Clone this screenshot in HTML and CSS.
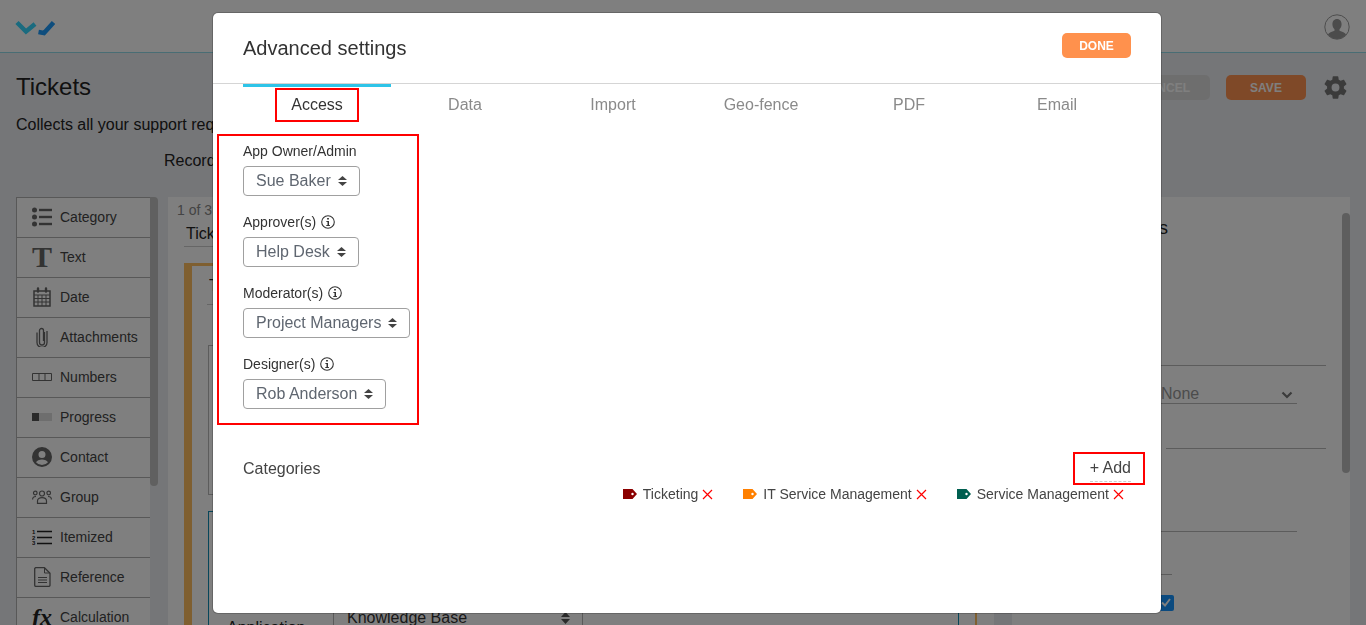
FILE: index.html
```html
<!DOCTYPE html>
<html lang="en">
<head>
<meta charset="utf-8">
<title>Advanced settings</title>
<link rel="stylesheet" href="styles.css">
</head>
<body>
<div class="page">
  <header class="topbar">
    <svg class="logo" viewBox="0 0 40 16" width="40" height="16"><path class="logo-a" d="M2 2.500 L11 11.500 L20 4" /><path class="logo-b" d="M23.500 12 L29 13 L38.500 2.500" /></svg>
    <svg class="avatar" viewBox="0 0 26 26" width="26" height="26"><circle cx="13" cy="13" r="12.200" fill="none" stroke="#999" stroke-width="1"/><path d="M13 5c3 0 4.600 2.300 4.600 5.200 0 2.100-.9 4-2.100 5v1.600c2.800 1 5.500 2 6.600 3.700A12 12 0 0 1 13 25a12 12 0 0 1-9.100-4.500c1.100-1.700 3.800-2.700 6.600-3.700v-1.600c-1.200-1-2.100-2.900-2.100-5C8.400 7.300 10 5 13 5z" fill="#999"/></svg>
  </header>
  <main class="main">
    <div class="title-row">
      <h1 class="title">Tickets</h1>
      <div class="actions">
        <button class="btn btn-cancel">CANCEL</button>
        <button class="btn btn-save">SAVE</button>
        <svg class="gear" viewBox="0 0 24 24" width="27" height="27"><path fill="#777" d="M19.430 12.980c.04-.32.07-.64.07-.98s-.03-.66-.07-.98l2.110-1.650c.19-.15.240-.42.120-.64l-2-3.460c-.12-.22-.390-.3-.610-.22l-2.490 1c-.52-.4-1.080-.73-1.690-.98l-.38-2.650A.49.49 0 0 0 14 2h-4c-.25 0-.46.18-.49.42l-.38 2.650c-.61.25-1.170.59-1.690.98l-2.490-1c-.23-.09-.49 0-.61.22l-2 3.460c-.13.22-.07.490.12.640l2.110 1.650c-.04.32-.07.65-.07.98s.03.66.07.98l-2.110 1.650c-.19.15-.24.42-.12.64l2 3.460c.12.22.39.3.61.22l2.490-1c.52.4 1.080.73 1.690.98l.38 2.650c.03.24.24.42.49.42h4c.25 0 .46-.18.49-.42l.38-2.650c.61-.25 1.170-.59 1.690-.98l2.490 1c.23.09.49 0 .61-.22l2-3.460c.12-.22.07-.49-.12-.64l-2.110-1.650zM12 15.500a3.500 3.500 0 1 1 0-7 3.500 3.500 0 0 1 0 7z"/></svg>
      </div>
    </div>
    <p class="subtitle">Collects all your support requests in one place</p>
    <p class="record">Record</p>
    <div class="workspace">
      <div class="palette-wrap">
        <ul class="palette">
          <li class="pal-item"><span class="pal-icon"><svg viewBox="0 0 20 20" width="20" height="20"><g fill="#666"><circle cx="2.500" cy="3" r="2.500"/><circle cx="2.500" cy="10" r="2.500"/><circle cx="2.500" cy="17" r="2.500"/><rect x="7" y="1.800" width="13" height="2.400"/><rect x="7" y="8.800" width="13" height="2.400"/><rect x="7" y="15.800" width="13" height="2.400"/></g></svg></span>Category</li>
          <li class="pal-item"><span class="pal-icon pal-serif">T</span>Text</li>
          <li class="pal-item"><span class="pal-icon"><svg viewBox="0 0 18 20" width="18" height="20"><path fill="none" stroke="#666" stroke-width="1.500" d="M1 4h16v15H1z"/><path stroke="#666" stroke-width="1" d="M1 8h16M1 11.500h16M1 15h16M5 8v11M9 8v11M13 8v11"/><path stroke="#666" stroke-width="2.400" stroke-linecap="round" d="M5 1.500v3M13 1.500v3"/></svg></span>Date</li>
          <li class="pal-item"><span class="pal-icon"><svg viewBox="0 0 12 20" width="12" height="20"><path fill="none" stroke="#666" stroke-width="1.300" d="M8.500 5v10.500a2.500 2.500 0 0 1-5 0V3.500a2 2 0 0 1 4 0V14M1 5.500v10a5 5 0 0 0 10 0V4"/></svg></span>Attachments</li>
          <li class="pal-item"><span class="pal-icon"><svg viewBox="0 0 20 8" width="20" height="8"><path fill="none" stroke="#666" d="M.5.500h19v7H.5zM7 .5v7M13 .5v7"/></svg></span>Numbers</li>
          <li class="pal-item"><span class="pal-icon"><svg viewBox="0 0 20 8" width="20" height="8"><rect width="7" height="8" fill="#555"/><rect x="7" width="13" height="8" fill="#ddd"/></svg></span>Progress</li>
          <li class="pal-item"><span class="pal-icon"><svg viewBox="0 0 20 20" width="20" height="20"><path fill="#666" fill-rule="evenodd" d="M10 0a10 10 0 1 0 0 20 10 10 0 0 0 0-20zm0 4a3.500 3.500 0 1 1 0 7 3.500 3.500 0 0 1 0-7zm0 14a8 8 0 0 1-6-2.800c.7-1.700 3.500-2.800 6-2.800s5.300 1.100 6 2.800A8 8 0 0 1 10 18z"/></svg></span>Contact</li>
          <li class="pal-item"><span class="pal-icon"><svg viewBox="0 0 20 14" width="20" height="14"><g fill="none" stroke="#666" stroke-width="1.200"><circle cx="10" cy="3.500" r="2.500"/><circle cx="3.300" cy="3" r="1.800"/><circle cx="16.700" cy="3" r="1.800"/><path d="M5.500 13.400v-2.500c0-2 2-3.200 4.500-3.200s4.500 1.200 4.500 3.200v2.500z"/><path d="M.6 9.500c0-2 1.300-3 3.400-3M19.400 9.500c0-2-1.300-3-3.400-3"/></g></svg></span>Group</li>
          <li class="pal-item"><span class="pal-icon"><svg viewBox="0 0 20 16" width="20" height="16"><path stroke="#222" stroke-width="1.400" d="M5 2.500h15M5 8.500h15M5 14.500h15"/><g class="num-mini"><text x="0" y="5">1</text><text x="0" y="10.500">2</text><text x="0" y="16">3</text></g></svg></span>Itemized</li>
          <li class="pal-item"><span class="pal-icon"><svg viewBox="0 0 17 20" width="17" height="20"><path fill="none" stroke="#666" stroke-width="1.300" stroke-linejoin="round" d="M1.500.700h9l5.500 5.500v12a1.200 1.200 0 0 1-1.200 1.200H1.700A1.200 1.200 0 0 1 .7 18.200V1.500z"/><path fill="none" stroke="#666" stroke-width="1" d="M10.500 1v5h5.500M4 10.500h9M4 13h9M4 15.500h9"/></svg></span>Reference</li>
          <li class="pal-item"><span class="pal-icon pal-fx">fx</span>Calculation</li>
        </ul>
        <div class="pal-scroll"></div>
      </div>
      <section class="canvas">
        <div class="page-count">1 of 3</div>
        <div class="page-name">Tickets</div>
        <div class="card">
          <div class="card-title">Tickets</div>
          <div class="card-box"></div>
          <div class="card-active">
            <div class="app-row">
              <span class="app-label">Application</span>
              <span class="app-select">Knowledge Base<svg class="updown" viewBox="0 0 9 12" width="9" height="12"><path fill="#555" d="M4.500 0L9 5H0zM4.500 12L0 7h9z"/></svg></span>
            </div>
          </div>
        </div>
      </section>
      <aside class="props">
        <div class="props-head">Field settings</div>
        <div class="rule rule-a"></div>
        <div class="none-select">None<svg viewBox="0 0 12 8" width="12" height="8"><path fill="none" stroke="#777" stroke-width="2.200" d="M1.500 1.500L6 6l4.500-4.500"/></svg></div>
        <div class="rule rule-b"></div>
        <div class="rule rule-c"></div>
        <div class="rule rule-d"></div>
        <div class="check-row"><span class="checkbox"><svg viewBox="0 0 14 14" width="14" height="14"><path fill="none" stroke="#fff" stroke-width="2" d="M3 7.500l3 3 5-6.500"/></svg></span></div>
        <div class="props-scroll"></div>
      </aside>
    </div>
  </main>
</div>
<div class="backdrop"></div>
<div class="modal">
  <div class="modal-head">
    <h2 class="modal-title">Advanced settings</h2>
    <button class="done">DONE</button>
  </div>
  <nav class="tabs">
    <div class="tab tab-active"><span class="mark-tab">Access</span></div>
    <div class="tab">Data</div>
    <div class="tab">Import</div>
    <div class="tab">Geo-fence</div>
    <div class="tab">PDF</div>
    <div class="tab">Email</div>
  </nav>
  <div class="access">
    <div class="field">
      <div class="field-label">App Owner/Admin</div>
      <div class="select">Sue Baker<svg class="updown" viewBox="0 0 9 12" width="9" height="12"><path fill="#444" d="M4.500 1L9 5H0zM4.500 11L0 7h9z"/></svg></div>
    </div>
    <div class="field">
      <div class="field-label">Approver(s)<svg class="info" viewBox="0 0 14 14" width="14" height="14"><circle cx="7" cy="7" r="6.300" fill="none" stroke="#333" stroke-width="1.100"/><path fill="#333" d="M6.100 3h1.800v1.600H6.100zM5.400 6h2.600v3.900h.9V11H5.300V9.900h1.200V7.100H5.400z"/></svg></div>
      <div class="select">Help Desk<svg class="updown" viewBox="0 0 9 12" width="9" height="12"><path fill="#444" d="M4.500 1L9 5H0zM4.500 11L0 7h9z"/></svg></div>
    </div>
    <div class="field">
      <div class="field-label">Moderator(s)<svg class="info" viewBox="0 0 14 14" width="14" height="14"><circle cx="7" cy="7" r="6.300" fill="none" stroke="#333" stroke-width="1.100"/><path fill="#333" d="M6.100 3h1.800v1.600H6.100zM5.400 6h2.600v3.900h.9V11H5.300V9.900h1.200V7.100H5.400z"/></svg></div>
      <div class="select">Project Managers<svg class="updown" viewBox="0 0 9 12" width="9" height="12"><path fill="#444" d="M4.500 1L9 5H0zM4.500 11L0 7h9z"/></svg></div>
    </div>
    <div class="field">
      <div class="field-label">Designer(s)<svg class="info" viewBox="0 0 14 14" width="14" height="14"><circle cx="7" cy="7" r="6.300" fill="none" stroke="#333" stroke-width="1.100"/><path fill="#333" d="M6.100 3h1.800v1.600H6.100zM5.400 6h2.600v3.900h.9V11H5.300V9.900h1.200V7.100H5.400z"/></svg></div>
      <div class="select">Rob Anderson<svg class="updown" viewBox="0 0 9 12" width="9" height="12"><path fill="#444" d="M4.500 1L9 5H0zM4.500 11L0 7h9z"/></svg></div>
    </div>
  </div>
  <div class="cat-head">
    <span class="cat-title">Categories</span>
    <span class="add-mark"><span class="add">+ Add</span></span>
  </div>
  <div class="tags">
    <span class="tag"><svg class="tag-icon" viewBox="0 0 14 10" width="14" height="10"><path class="tag-red" fill-rule="evenodd" d="M0 0h9.500L14 5 9.500 10H0zM9.500 3.800a1.200 1.200 0 1 0 0 2.400 1.200 1.200 0 0 0 0-2.400z"/></svg>Ticketing<svg class="x" viewBox="0 0 11 11" width="11" height="11"><path d="M1 1l9 9M10 1l-9 9"/></svg></span>
    <span class="tag"><svg class="tag-icon" viewBox="0 0 14 10" width="14" height="10"><path class="tag-orange" fill-rule="evenodd" d="M0 0h9.500L14 5 9.500 10H0zM9.500 3.800a1.200 1.200 0 1 0 0 2.400 1.200 1.200 0 0 0 0-2.400z"/></svg>IT Service Management<svg class="x" viewBox="0 0 11 11" width="11" height="11"><path d="M1 1l9 9M10 1l-9 9"/></svg></span>
    <span class="tag"><svg class="tag-icon" viewBox="0 0 14 10" width="14" height="10"><path class="tag-green" fill-rule="evenodd" d="M0 0h9.500L14 5 9.500 10H0zM9.500 3.800a1.200 1.200 0 1 0 0 2.400 1.200 1.200 0 0 0 0-2.400z"/></svg>Service Management<svg class="x" viewBox="0 0 11 11" width="11" height="11"><path d="M1 1l9 9M10 1l-9 9"/></svg></span>
  </div>
</div>
</body>
</html>
```

FILE: styles.css
```css
* { box-sizing: border-box; }
html, body { margin: 0; height: 625px; overflow: hidden; }
body { font-family: "Liberation Sans", Arial, sans-serif; color: #333; background: #eaecf0; }
.page { width: 1366px; height: 625px; overflow: hidden; }

.topbar { height: 53px; background: #fff; border-bottom: 1px solid #93dbe9; display: flex; align-items: center; justify-content: space-between; padding: 0 16px 0 15px; }
.logo { margin-top: 4px; }
.logo path { fill: none; stroke-width: 4.500; }
.logo-a { stroke: #34d6ff; }
.logo-b { stroke: #1c9afa; }
.avatar { margin-top: 1px; }

.main { padding: 0 16px; }
.title-row { display: flex; justify-content: space-between; align-items: center; height: 25px; margin-top: 22px; }
.title { margin: 0 0 2px; font-size: 24px; font-weight: 400; color: #222; }
.actions { display: flex; align-items: center; }
.btn { height: 25px; border: 0; border-radius: 5px; font: 700 12px "Liberation Sans", Arial, sans-serif; padding: 0; }
.btn-cancel { width: 90px; background: #dddddd; color: #fff; margin-right: 16px; }
.btn-save { width: 80px; background: #ff9350; color: #fff; margin-right: 16px; }
.gear { display: block; margin-right: 1px; }
.subtitle { margin: 16px 0 0; font-size: 16px; line-height: 18px; color: #222; }
.record { margin: 18px 0 0 148px; font-size: 16px; line-height: 18px; color: #222; }

.workspace { display: flex; margin-top: 27px; align-items: flex-start; }
.palette-wrap { display: flex; width: 142px; flex: none; }
.palette { list-style: none; margin: 0; padding: 0; width: 134px; background: #fff; border-left: 1px solid #b0b0b0; }
.pal-item { height: 40px; border-top: 1px solid #b0b0b0; display: flex; align-items: center; font-size: 14px; color: #444; padding-bottom: 1px; }
.pal-icon { width: 20px; margin: 0 8px 0 15px; display: flex; justify-content: center; align-items: center; }
.pal-serif { font: 700 30px/30px "Liberation Serif", serif; color: #666; }
.pal-fx { font: italic 700 24px/30px "Liberation Serif", serif; color: #222; }
.num-mini text { font: 700 6px "Liberation Sans", Arial, sans-serif; fill: #222; }
.pal-scroll { width: 8px; height: 289px; background: #c0c0c0; border-radius: 0 4px 4px 4px; }

.canvas { width: 826px; height: 428px; margin-left: 10px; background: #fff; flex: none; padding: 5px 0 0 0; }
.page-count { font-size: 14px; line-height: 16px; color: #888; margin-left: 9px; }
.page-name { margin: 7px 0 0 16px; padding: 0 0 3px 2px; border-bottom: 1px solid #ccc; font-size: 16px; line-height: 18px; width: 792px; color: #222; }
.card { margin: 16px 0 0 16px; width: 793px; height: 380px; border: 1px solid #ffbe60; border-width: 3px 2px 0 8px; padding: 11px 16px 0 16px; }
.card-title { font-size: 16px; line-height: 18px; color: #222; padding: 0 0 9px 2px; border-bottom: 1px solid #ccc; width: 200px; margin-left: -1px; }
.card-box { height: 150px; border: 1px solid #b8b8b8; margin: 40px 0 16px; }
.card-active { height: 150px; border: 1px solid #0d8cb5; padding-top: 91px; }
.app-row { display: flex; }
.app-label { width: 124px; font-size: 16px; padding: 16px 0 0 18px; color: #222; }
.app-select { width: 250px; height: 30px; border: 1px solid #b4b4b4; display: flex; justify-content: space-between; align-items: center; font-size: 16px; padding: 0 12px 0 13px; color: #333; }
.updown { flex: none; }

.props { position: relative; width: 338px; height: 428px; margin-left: 18px; background: #fff; padding-top: 168px; flex: none; }
.props-head { position: absolute; left: 0; top: 21px; right: 0; text-align: right; padding-right: 182px; font-size: 18px; color: #222; }
.rule { height: 1px; background: #b8b8b8; }
.rule-a { width: 314px; }
.none-select { margin: 18px 0 0 149px; width: 136px; height: 20px; border-bottom: 1px solid #b8b8b8; display: flex; justify-content: space-between; align-items: center; padding: 0 4px 0 0; font-size: 16px; color: #999; }
.none-select svg { margin-top: 2px; }
.rule-b { width: 160px; margin: 44px 0 0 154px; }
.rule-c { width: 285px; margin-top: 82px; }
.rule-d { width: 160px; margin-top: 42px; }
.check-row { margin: 20px 0 0 147px; }
.checkbox { display: block; width: 15px; height: 16px; background: #1694ff; border-radius: 2px; }
.props-scroll { position: absolute; right: 0; top: 16px; width: 8px; height: 260px; background: #bdbdbd; border-radius: 4px; }

.backdrop { position: fixed; inset: 0; background: rgba(0, 0, 0, .5); }
.modal { position: fixed; left: 213px; top: 13px; width: 948px; height: 600px; background: #fff; border-radius: 5px; border: 0; box-shadow: 0 0 0 1px rgba(0, 0, 0, .2); }
.modal-head { height: 71px; padding: 20px 30px 0; display: flex; justify-content: space-between; align-items: flex-start; border-bottom: 1px solid #d5d5d5; }
.modal-title { margin: 4px 0 0; font-size: 20px; line-height: 22px; font-weight: 400; color: #333; }
.done { width: 69px; height: 25px; border: 0; border-radius: 5px; background: #ff914d; color: #fff; font: 700 12px "Liberation Sans", Arial, sans-serif; padding: 0; }

.tabs { display: flex; padding-left: 30px; }
.tab { width: 148px; height: 39px; text-align: center; font-size: 16px; color: #8a8a8a; padding-top: 12px; line-height: 18px; }
.tab-active { border-top: 3px solid #2ec4e8; padding-top: 1px; color: #333; }
.mark-tab { display: inline-block; width: 84px; height: 34px; line-height: 30px; border: 2px solid #f00; }

.access { margin: 11px 0 0 4px; width: 202px; height: 291px; border: 2px solid #f00; padding: 5px 0 0 24px; }
.field { height: 71px; }
.field-label { display: flex; align-items: center; gap: 5px; height: 20px; font-size: 14px; color: #333; }
.select { display: inline-flex; align-items: center; gap: 7px; height: 30px; margin-top: 5px; padding: 0 12px; border: 1px solid #a0a0a0; border-radius: 4px; font-size: 16px; color: #5f6670; }

.cat-head { display: flex; justify-content: space-between; align-items: center; margin: 27px 16px 0 30px; height: 33px; }
.cat-title { font-size: 16px; color: #444; }
.add-mark { width: 72px; height: 33px; border: 2px solid #f00; display: flex; justify-content: flex-end; padding: 5px 12px 0 0; }
.add { font-size: 16px; line-height: 18px; height: 23px; color: #444; border-bottom: 1px dashed #ccc; }

.tags { display: flex; justify-content: flex-end; gap: 30px; margin: 0 37px 0 0; }
.tag { display: flex; align-items: center; height: 18px; font-size: 14px; color: #444; }
.tag-icon { margin-right: 6px; }
.tag-red { fill: #8b0000; }
.tag-orange { fill: #ff8000; }
.tag-green { fill: #005f50; }
.x { margin-left: 4px; }
.x path { fill: none; stroke: #f00; stroke-width: 1.200; }
```
